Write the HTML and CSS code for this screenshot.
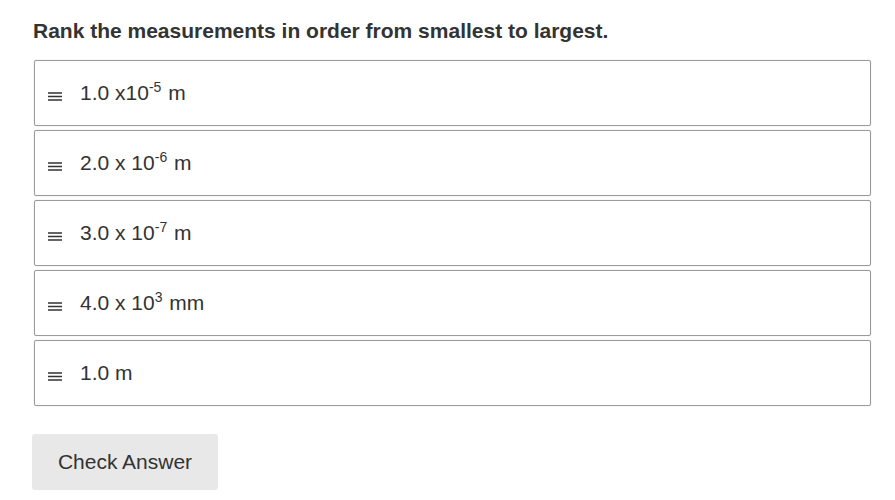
FILE: index.html
```html
<!DOCTYPE html>
<html lang="en">
<head>
    <meta charset="UTF-8">
    <title>Ranking</title>
    <link rel="stylesheet" href="styles.css">
</head>
<body>
    <div class="question">
        <h2>Rank the measurements in order from smallest to largest.</h2>
        <ul class="rank-list">
            <li class="rank-item">
                <svg class="handle" width="14" height="9" viewBox="0 0 14 9"><path d="M0 1h14M0 4.5h14M0 8h14" stroke="#333" stroke-width="1.5"/></svg>
                <span>1.0 x10<sup>-5</sup> m</span>
            </li>
            <li class="rank-item">
                <svg class="handle" width="14" height="9" viewBox="0 0 14 9"><path d="M0 1h14M0 4.5h14M0 8h14" stroke="#333" stroke-width="1.5"/></svg>
                <span>2.0 x 10<sup>-6</sup> m</span>
            </li>
            <li class="rank-item">
                <svg class="handle" width="14" height="9" viewBox="0 0 14 9"><path d="M0 1h14M0 4.5h14M0 8h14" stroke="#333" stroke-width="1.5"/></svg>
                <span>3.0 x 10<sup>-7</sup> m</span>
            </li>
            <li class="rank-item">
                <svg class="handle" width="14" height="9" viewBox="0 0 14 9"><path d="M0 1h14M0 4.5h14M0 8h14" stroke="#333" stroke-width="1.5"/></svg>
                <span>4.0 x 10<sup>3</sup> mm</span>
            </li>
            <li class="rank-item">
                <svg class="handle" width="14" height="9" viewBox="0 0 14 9"><path d="M0 1h14M0 4.5h14M0 8h14" stroke="#333" stroke-width="1.5"/></svg>
                <span>1.0 m</span>
            </li>
        </ul>
        <button class="check-btn">Check Answer</button>
    </div>
</body>
</html>
```

FILE: styles.css
```css
body {
    font-family: "Liberation Sans", Arial, sans-serif;
    background-color: #ffffff;
    color: #333333;
    margin: 0;
    padding: 0;
}
.question {
    padding: 19px 24px 0 33px;
}
h2 {
    font-size: 21px;
    font-weight: bold;
    margin: 0 0 17px 0;
    line-height: 24px;
}
.rank-list {
    list-style: none;
    margin: 0 0 28px 1px;
    padding: 0;
}
.rank-item {
    display: flex;
    align-items: center;
    height: 64px;
    border: 1px solid #9a9a9a;
    border-radius: 2px;
    box-shadow: 0 0 1px rgba(0,0,0,0.3);
    margin-bottom: 4px;
    padding: 0 0 0 13px;
    font-size: 21px;
}
.handle {
    margin: 7px 18px 0 0;
}
sup {
    font-size: 14px;
    line-height: 0;
    vertical-align: 8px;
    margin-right: 1px;
}
.check-btn {
    background-color: #e8e8e8;
    color: #333333;
    border: none;
    border-radius: 3px;
    width: 186px;
    height: 56px;
    font-family: "Liberation Sans", Arial, sans-serif;
    font-size: 21px;
    margin-left: -1px;
}
```
